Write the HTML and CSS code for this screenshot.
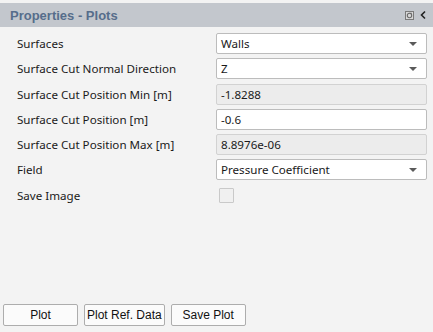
FILE: index.html
```html
<!DOCTYPE html>
<html lang="en">
<head>
  <meta charset="UTF-8">
  <title>Properties - Plots</title>
  <link rel="stylesheet" href="styles.css">
</head>
<body>

<div class="panel">
  <div class="panel-header">
    <span class="panel-title">Properties - Plots</span>
    <span class="panel-tools">
      <svg width="9" height="9" viewBox="0 0 9 9">
        <rect x="0.5" y="0.5" width="8" height="8" fill="#d8d8d8" stroke="#7a7a7a"/>
        <circle cx="4.5" cy="4.5" r="2.2" fill="none" stroke="#6a6a6a" stroke-width="1.1"/>
        <path d="M4.5 2.3 L6.8 2.3" stroke="#6a6a6a" stroke-width="1"/>
      </svg>
      <svg width="6" height="10" viewBox="0 0 6 10">
        <path d="M5 1.5 L1.5 5 L5 8.5" fill="none" stroke="#222" stroke-width="1.6"/>
      </svg>
    </span>
  </div>

  <div class="props">
    <label>Surfaces</label>
    <div class="field select">Walls<span class="arrow"></span></div>

    <label>Surface Cut Normal Direction</label>
    <div class="field select">Z<span class="arrow"></span></div>

    <label>Surface Cut Position Min [m]</label>
    <div class="field readonly">-1.8288</div>

    <label>Surface Cut Position [m]</label>
    <div class="field">-0.6</div>

    <label>Surface Cut Position Max [m]</label>
    <div class="field readonly">8.8976e-06</div>

    <label>Field</label>
    <div class="field select">Pressure Coefficient<span class="arrow"></span></div>

    <label>Save Image</label>
    <div class="check-cell"><span class="checkbox"></span></div>
  </div>

  <div class="spacer"></div>

  <div class="actions">
    <button class="btn">Plot</button>
    <button class="btn">Plot Ref. Data</button>
    <button class="btn">Save Plot</button>
  </div>
</div>

</body>
</html>
```

FILE: styles.css
```css
* {
  box-sizing: border-box;
}

html, body {
  margin: 0;
  height: 100%;
}

body {
  background: #f3f3f3;
  font-family: "Noto Sans", "Open Sans", sans-serif;
  font-size: 11.6px;
  color: #1a1a1a;
}

.panel {
  display: flex;
  flex-direction: column;
  height: 100vh;
  padding-top: 3px;
}

.panel-header {
  display: flex;
  align-items: center;
  justify-content: space-between;
  height: 24px;
  background: #c3c7cd;
  padding: 0 7px 0 10px;
}

.panel-title {
  font-family: "Liberation Sans", Arial, sans-serif;
  font-weight: bold;
  font-size: 13px;
  color: #566d8b;
}

.panel-tools {
  display: flex;
  align-items: center;
  gap: 6px;
}

.props {
  display: grid;
  grid-template-columns: 1fr 211px;
  grid-auto-rows: 21px;
  row-gap: 4.3px;
  align-items: center;
  padding: 6px 6px 0 17px;
}

.props label {
  line-height: 21px;
  white-space: nowrap;
}

.field {
  position: relative;
  height: 21px;
  line-height: 19px;
  padding-left: 4px;
  background: #fff;
  border: 1px solid #bcbcbc;
  border-radius: 2px;
}

.readonly {
  background: #ececec;
  border-color: #d2d2d2;
}

.arrow {
  position: absolute;
  right: 9px;
  top: 8px;
  width: 0;
  height: 0;
  border-left: 4px solid transparent;
  border-right: 4px solid transparent;
  border-top: 4px solid #5a5a5a;
}

.check-cell {
  display: flex;
  align-items: center;
  height: 21px;
  padding-left: 3px;
}

.checkbox {
  width: 15px;
  height: 15px;
  background: #f0f0f0;
  border: 1px solid #c9c9c9;
  border-radius: 1px;
}

.spacer {
  flex: 1;
}

.actions {
  display: flex;
  gap: 6px;
  padding: 0 0 6px 3px;
}

.btn {
  height: 22px;
  min-width: 75px;
  padding: 0 2px;
  font-family: "Liberation Sans", Arial, sans-serif;
  font-size: 12px;
  color: #111;
  background: #fbfbfb;
  border: 1px solid #adadad;
  border-radius: 2px;
}
```
